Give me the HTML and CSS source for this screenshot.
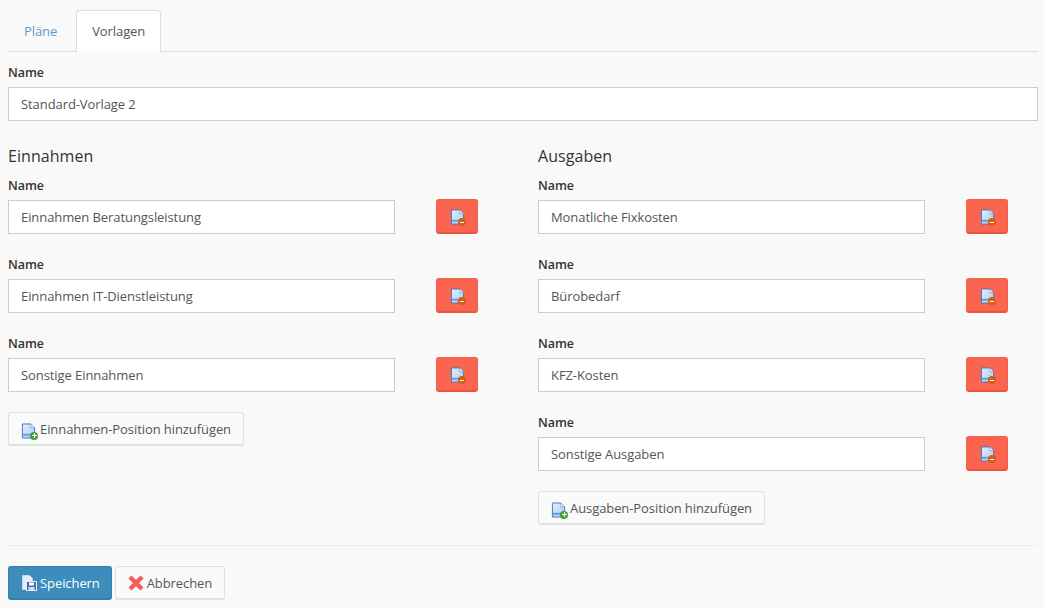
FILE: index.html
```html
<!DOCTYPE html>
<html lang="de">
<head>
  <meta charset="UTF-8">
  <title>Vorlagen</title>
  <link rel="stylesheet" href="styles.css">
</head>
<body>
  <svg class="defs" width="0" height="0">
    <defs>
      <linearGradient id="paper" x1="0" y1="0" x2="1" y2="1">
        <stop offset="0" stop-color="#e3eefc"/>
        <stop offset="1" stop-color="#a9caf0"/>
      </linearGradient>
      <symbol id="doc" viewBox="0 0 16 16">
        <path d="M1.500.5h9l4 4v11h-13z" fill="url(#paper)" stroke="#3f74bd"/>
        <path d="M10.500.5v4h4" fill="#fff" stroke="#7fa6d8"/>
        <rect x="2" y="11" width="12" height="2" fill="#5b9ce4"/>
      </symbol>
    </defs>
  </svg>

  <!-- Tabs -->
  <ul class="tabs">
    <li class="tab"><a href="#">Pläne</a></li>
    <li class="tab active"><a href="#">Vorlagen</a></li>
  </ul>

  <div class="field">
    <label class="field-label">Name</label>
    <input class="input" type="text" value="Standard-Vorlage 2">
  </div>

  <div class="columns">
    <!-- Einnahmen -->
    <section>
      <h4>Einnahmen</h4>
      <div class="position">
        <label class="field-label">Name</label>
        <div class="position-row">
          <input class="input" type="text" value="Einnahmen Beratungsleistung">
          <button class="btn-remove" type="button"><svg class="icon"><use href="#doc"/></svg><span class="badge minus"></span></button>
        </div>
      </div>
      <div class="position">
        <label class="field-label">Name</label>
        <div class="position-row">
          <input class="input" type="text" value="Einnahmen IT-Dienstleistung">
          <button class="btn-remove" type="button"><svg class="icon"><use href="#doc"/></svg><span class="badge minus"></span></button>
        </div>
      </div>
      <div class="position">
        <label class="field-label">Name</label>
        <div class="position-row">
          <input class="input" type="text" value="Sonstige Einnahmen">
          <button class="btn-remove" type="button"><svg class="icon"><use href="#doc"/></svg><span class="badge minus"></span></button>
        </div>
      </div>
      <button class="btn" type="button"><span class="icon-wrap"><svg class="icon"><use href="#doc"/></svg><span class="badge plus"></span></span>Einnahmen-Position hinzufügen</button>
    </section>

    <!-- Ausgaben -->
    <section>
      <h4>Ausgaben</h4>
      <div class="position">
        <label class="field-label">Name</label>
        <div class="position-row">
          <input class="input" type="text" value="Monatliche Fixkosten">
          <button class="btn-remove" type="button"><svg class="icon"><use href="#doc"/></svg><span class="badge minus"></span></button>
        </div>
      </div>
      <div class="position">
        <label class="field-label">Name</label>
        <div class="position-row">
          <input class="input" type="text" value="Bürobedarf">
          <button class="btn-remove" type="button"><svg class="icon"><use href="#doc"/></svg><span class="badge minus"></span></button>
        </div>
      </div>
      <div class="position">
        <label class="field-label">Name</label>
        <div class="position-row">
          <input class="input" type="text" value="KFZ-Kosten">
          <button class="btn-remove" type="button"><svg class="icon"><use href="#doc"/></svg><span class="badge minus"></span></button>
        </div>
      </div>
      <div class="position">
        <label class="field-label">Name</label>
        <div class="position-row">
          <input class="input" type="text" value="Sonstige Ausgaben">
          <button class="btn-remove" type="button"><svg class="icon"><use href="#doc"/></svg><span class="badge minus"></span></button>
        </div>
      </div>
      <button class="btn" type="button"><span class="icon-wrap"><svg class="icon"><use href="#doc"/></svg><span class="badge plus"></span></span>Ausgaben-Position hinzufügen</button>
    </section>
  </div>

  <hr class="divider">

  <div class="actions">
    <button class="btn btn-primary" type="button">
      <svg class="icon-small" viewBox="0 0 16 16">
        <path d="M1.500.5h7l3 3v11h-10z" fill="#e4eefa" stroke="#c5d6ea"/>
        <rect x="5.500" y="6.500" width="10" height="9" fill="#3f6fa8" stroke="#e4eefa"/>
        <rect x="8" y="7.500" width="5" height="3" fill="#fff"/>
        <rect x="7.500" y="12" width="6" height="3" fill="#cfe0f2"/>
      </svg>Speichern
    </button>
    <button class="btn btn-cancel" type="button">
      <svg class="icon-small" viewBox="0 0 16 16">
        <path d="M.8 3.500 3.500.8 8 5.300 12.500.8l2.700 2.700L10.700 8l4.500 4.500-2.700 2.700L8 10.700l-4.500 4.500-2.700-2.700L5.300 8z" fill="#f4595c" stroke="#e4484c" stroke-width=".5"/>
      </svg>Abbrechen
    </button>
  </div>
</body>
</html>
```

FILE: styles.css
```css
/* General */
body {
  margin: 0;
  padding: 10px 6px 0 8px;
  background-color: #f9f9f9;
  color: #555;
  font-family: "Open Sans", "Noto Sans", Arial, sans-serif;
  font-size: 13px;
  line-height: 20px;
  letter-spacing: -0.08px;
}

.defs {
  position: absolute;
}

/* Tabs */
.tabs {
  display: flex;
  margin: 0;
  padding: 0;
  height: 41px;
  list-style: none;
  border-bottom: 1px solid #ddd;
}

.tab {
  margin-right: 3px;
}

.tab a {
  display: block;
  height: 41px;
  box-sizing: border-box;
  padding: 11px 16px 0;
  color: #5b9bd1;
  text-decoration: none;
}

.tab.active a {
  height: 42px;
  width: 85px;
  padding: 10px 0 0;
  background-color: #fff;
  color: #555;
  border: 1px solid #ddd;
  border-bottom: none;
  border-radius: 4px 4px 0 0;
  text-align: center;
}

/* Fields */
.field {
  margin-top: 10px;
}

.field-label {
  display: block;
  padding-top: 1px;
  margin-bottom: 4px;
  color: #333;
  font-size: 12.5px;
  font-weight: 600;
}

.input {
  display: block;
  box-sizing: border-box;
  width: 100%;
  height: 34px;
  padding: 0 12px;
  background-color: #fff;
  color: #555;
  border: 1px solid #ccc;
  font: inherit;
  letter-spacing: inherit;
}

/* Columns */
.columns {
  display: grid;
  grid-template-columns: 500px 500px;
  gap: 30px;
  margin-top: 24px;
}

h4 {
  margin: 0 0 8px;
  color: #333;
  font-size: 16px;
  font-weight: 400;
  line-height: 22px;
  letter-spacing: 0.05px;
}

.position {
  margin-bottom: 20px;
}

.position-row {
  display: flex;
  align-items: flex-start;
}

.position-row .input {
  width: 387px;
}

/* Buttons */
.btn-remove {
  position: relative;
  width: 42px;
  height: 35px;
  margin: -1px 0 0 41px;
  padding: 2px 0 0;
  background-color: #fb6550;
  border: 1px solid #f4604b;
  border-bottom: 2px solid #e8543f;
  border-radius: 3px;
}

.icon {
  display: block;
  width: 15px;
  height: 16px;
}

.btn-remove .icon {
  margin: 0 auto;
}

.btn-remove .badge {
  left: 21px;
  top: 18px;
}

.badge {
  position: absolute;
  box-sizing: border-box;
  width: 8px;
  height: 8px;
  border-radius: 50%;
}

.badge.minus {
  background: linear-gradient(#fff, #fff) center / 4px 1px no-repeat #d2600f;
}

.badge.plus {
  left: 9px;
  top: 9px;
  background: linear-gradient(#fff, #fff) center / 5px 1px no-repeat, linear-gradient(#fff, #fff) center / 1px 5px no-repeat, #4c9a3c;
}

.icon-wrap {
  position: relative;
  display: block;
  width: 19px;
  height: 17px;
  margin-top: 5px;
}

.btn {
  display: inline-flex;
  align-items: center;
  height: 34px;
  box-sizing: border-box;
  padding: 0 12px;
  background-color: #fafafa;
  color: #555;
  border: 1px solid #e0e0e0;
  border-bottom-width: 2px;
  border-radius: 3px;
  font: inherit;
  letter-spacing: inherit;
}

.divider {
  margin: 20px 0;
  border: none;
  border-top: 1px solid #eee;
}

.actions {
  display: flex;
  gap: 3px;
}

.btn-primary {
  padding-right: 11px;
  background-color: #3c8dbc;
  color: #fff;
  border-color: #367fa9;
}

.icon-small {
  width: 16px;
  height: 16px;
  margin-right: 3px;
}
```
